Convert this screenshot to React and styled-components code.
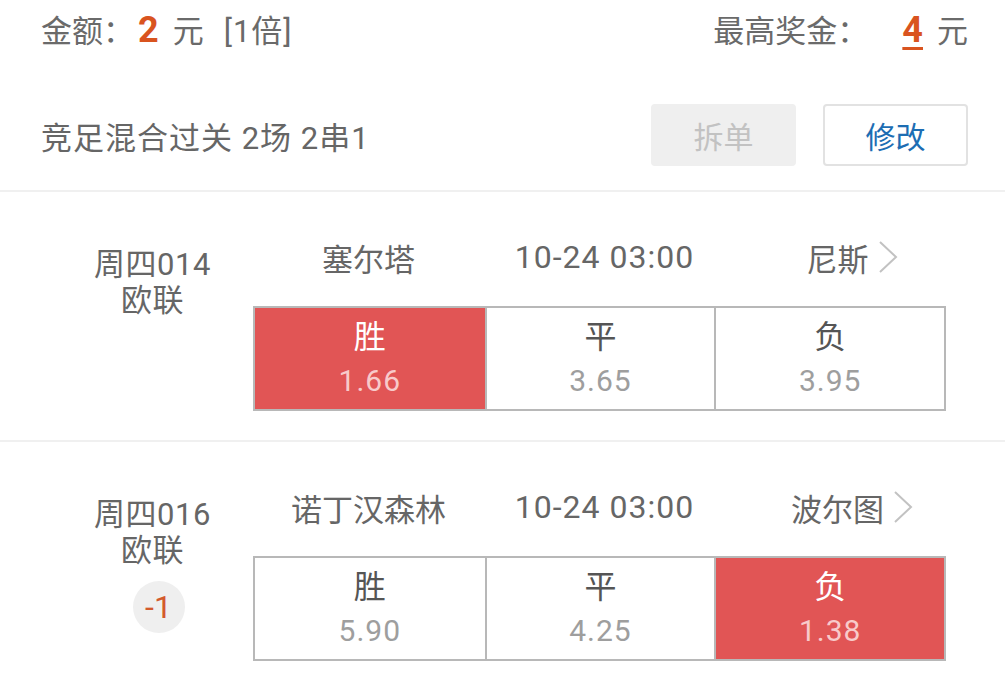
import React from "react";
import styled, { createGlobalStyle } from "styled-components";

const GlobalStyle = createGlobalStyle`
	body {
		margin: 0;
		background: #ffffff;
		font-family: Roboto, "Noto Sans CJK SC", sans-serif;
		color: #666666;
	}
`;

const matches = [
	{
		id: "周四014",
		league: "欧联",
		home: "塞尔塔",
		time: "10-24 03:00",
		away: "尼斯",
		odds: [
			{ label: "胜", value: "1.66", picked: true },
			{ label: "平", value: "3.65" },
			{ label: "负", value: "3.95" },
		],
	},
	{
		id: "周四016",
		league: "欧联",
		handicap: "-1",
		home: "诺丁汉森林",
		time: "10-24 03:00",
		away: "波尔图",
		odds: [
			{ label: "胜", value: "5.90" },
			{ label: "平", value: "4.25" },
			{ label: "负", value: "1.38", picked: true },
		],
	},
];

const Arrow = () => (
	<svg width='22' height='34' viewBox='0 0 22 34'>
		<polyline
			points='3,2 19,17 3,32'
			fill='none'
			stroke='#c2c2c2'
			strokeWidth='2'
		/>
	</svg>
);

const App = () => {
	return (
		<Page>
			<GlobalStyle />
			<AmountRow>
				<Amount>
					金额：<Money>2</Money>
					<Unit>元</Unit>
					<Times>[1倍]</Times>
				</Amount>
				<Amount>
					最高奖金：<Money underline>4</Money>
					<Unit>元</Unit>
				</Amount>
			</AmountRow>
			<PlanRow>
				<PlanText>竞足混合过关 2场 2串1</PlanText>
				<ButtonGroup>
					<Button disabled>拆单</Button>
					<Button>修改</Button>
				</ButtonGroup>
			</PlanRow>
			{matches.map((m) => (
				<MatchBlock key={m.id}>
					<MatchInfo>
						<InfoLine>{m.id}</InfoLine>
						<InfoLine>{m.league}</InfoLine>
						{m.handicap && <Handicap>{m.handicap}</Handicap>}
					</MatchInfo>
					<MatchBody>
						<TeamRow>
							<Team>{m.home}</Team>
							<Team time>{m.time}</Team>
							<Team away>
								<AwayName>
									{m.away}
									<ArrowHold>
										<Arrow />
									</ArrowHold>
								</AwayName>
							</Team>
						</TeamRow>
						<OddsGrid>
							{m.odds.map((o) => (
								<OddsCell key={o.label} picked={o.picked}>
									<OddsLabel picked={o.picked}>{o.label}</OddsLabel>
									<OddsValue picked={o.picked}>{o.value}</OddsValue>
								</OddsCell>
							))}
						</OddsGrid>
					</MatchBody>
				</MatchBlock>
			))}
		</Page>
	);
};

export default App;

const Page = styled.div`
	width: 1005px;
	height: 688px;
	overflow: hidden;
	background: #ffffff;
`;

const AmountRow = styled.div`
	height: 56px;
	display: flex;
	align-items: center;
	justify-content: space-between;
	padding: 0 37px 0 41px;
	font-size: 31px;
	color: #6a6a6a;
`;

const Amount = styled.div`
	display: flex;
	align-items: baseline;
	white-space: pre;
`;

const Money = styled.span`
	color: #d9541f;
	font-weight: bold;
	font-size: 36px;
	margin-left: ${(p) => (p.underline ? "34px" : "4px")};
	text-decoration: ${(p) => (p.underline ? "underline" : "none")};
	text-decoration-thickness: 3px;
	text-underline-offset: 5px;
`;

const Unit = styled.span`
	margin-left: 14px;
`;

const Times = styled.span`
	margin-left: 20px;
	letter-spacing: 1px;
`;

const PlanRow = styled.div`
	display: flex;
	align-items: center;
	justify-content: space-between;
	padding: 48px 37px 24px 41px;
	border-bottom: 2px solid #f0f0f0;
`;

const PlanText = styled.div`
	font-size: 31px;
	letter-spacing: 1px;
	color: #666666;
`;

const ButtonGroup = styled.div`
	display: flex;
	gap: 27px;
`;

const Button = styled.div`
	width: 145px;
	height: 62px;
	box-sizing: border-box;
	display: flex;
	justify-content: center;
	align-items: center;
	border-radius: 4px;
	font-size: 30px;
	background: ${(p) => (p.disabled ? "#efefef" : "#ffffff")};
	color: ${(p) => (p.disabled ? "#c2c2c2" : "#1c6db3")};
	border: 2px solid ${(p) => (p.disabled ? "#efefef" : "#e2e2e2")};
`;

const MatchBlock = styled.div`
	display: grid;
	grid-template-columns: 201px 693px;
	padding: 40px 0 29px 52px;
	border-bottom: 2px solid #f0f0f0;
`;

const MatchInfo = styled.div`
	display: flex;
	flex-direction: column;
	align-items: center;
	margin-top: 15px;
`;

const InfoLine = styled.div`
	font-size: 31px;
	line-height: 36px;
	letter-spacing: 0.5px;
	color: #666666;
`;

const Handicap = styled.div`
	width: 52px;
	height: 52px;
	margin-top: 12px;
	margin-left: 12px;
	border-radius: 50%;
	background: #efefef;
	color: #d35a2c;
	font-size: 32px;
	display: flex;
	justify-content: center;
	align-items: center;
`;

const MatchBody = styled.div`
	display: flex;
	flex-direction: column;
`;

const TeamRow = styled.div`
	display: grid;
	grid-template-columns: repeat(3, 1fr);
	height: 50px;
	align-items: center;
	margin-bottom: 24px;
`;

const Team = styled.div`
	display: flex;
	justify-content: center;
	font-size: ${(p) => (p.time ? "32px" : "31px")};
	letter-spacing: ${(p) => (p.time ? "1px" : "0")};
	color: #666666;
	padding-left: ${(p) => (p.away ? "14px" : p.time ? "10px" : "0")};
`;

const AwayName = styled.span`
	position: relative;
`;

const ArrowHold = styled.span`
	position: absolute;
	left: calc(100% + 8px);
	top: 50%;
	transform: translateY(-50%);
	display: flex;
`;

const OddsGrid = styled.div`
	display: grid;
	grid-template-columns: repeat(3, 1fr);
	height: 105px;
	box-sizing: border-box;
	border: 2px solid #b8b8b8;
`;

const OddsCell = styled.div`
	display: flex;
	flex-direction: column;
	justify-content: center;
	align-items: center;
	background: ${(p) => (p.picked ? "#e15555" : "#ffffff")};
	& + & {
		border-left: 2px solid #b8b8b8;
	}
`;

const OddsLabel = styled.div`
	font-size: 32px;
	line-height: 44px;
	color: ${(p) => (p.picked ? "#ffffff" : "#555555")};
`;

const OddsValue = styled.div`
	font-size: 30px;
	line-height: 44px;
	letter-spacing: 1px;
	color: ${(p) => (p.picked ? "#f8caca" : "#9e9e9e")};
`;
